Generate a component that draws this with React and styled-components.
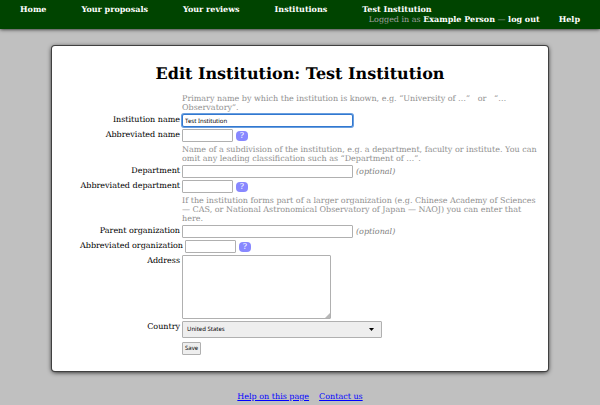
import React from "react";
import styled, { createGlobalStyle, css } from "styled-components";

const GlobalStyle = createGlobalStyle`
  *, *::before, *::after { box-sizing: border-box; }
  body {
    margin: 0;
    background: #c0c0c0;
    color: #000;
    font: 8px/10px "DejaVu Serif", serif;
    text-rendering: geometricPrecision;
  }
`;

const Header = styled.header`
  padding: 4px 20px;
  background: #004400;
  color: #a0a0a0;
  box-shadow: 0 0 4px #000;
`;

const Nav = styled.nav`
  display: flex;
  gap: 35px;
`;

const HeaderLink = styled.a`
  color: #fff;
  font-weight: bold;
  text-decoration: none;
`;

const Account = styled.div`
  display: flex;
  justify-content: flex-end;
  gap: 19px;
`;

const Card = styled.main`
  margin: 17px 52px 0;
  padding: 19px 9px 16px 28px;
  background: #fff;
  border-radius: 3px;
  box-shadow: 0 0 0 1px #404040, 0 1px 5px #000;
`;

const Title = styled.h1`
  margin: 0 0 10px -19px;
  font-size: 16px;
  line-height: 18px;
  text-align: center;
`;

const Form = styled.form`
  display: flex;
  flex-direction: column;
`;

const Hint = styled.p`
  margin: 0 0 2px 102px;
  padding-top: 1px;
  color: #909090;
  line-height: 9px;
`;

const Row = styled.div`
  display: flex;
  align-items: flex-start;
  gap: 2px;
  padding-bottom: 2px;
`;

const Label = styled.label`
  min-width: 100px;
  line-height: 11px;
  text-align: right;
  white-space: nowrap;
`;

const Control = styled.div`
  display: flex;
  align-items: center;
  gap: 3px;
`;

const fieldBox = css`
  margin: 0;
  border: 1px solid #b0b0b0;
  border-radius: 1px;
  color: #000;
  font: 6px/9px "Noto Sans", sans-serif;
  text-rendering: geometricPrecision;
`;

const Input = styled.input`
  ${fieldBox}
  width: ${(p) => (p.$short ? 51 : 171)}px;
  height: 13px;
  padding: 0 2px;
  background: #fff;
  ${(p) =>
    p.$active &&
    css`
      border-color: #3278d0;
      border-radius: 2px;
      box-shadow: 0 0 0 1px #6a9fdf;
    `}
`;

const TextArea = styled.textarea`
  ${fieldBox}
  display: block;
  width: 149px;
  height: 64px;
  padding: 2px;
  background: #fff;
  resize: none;
`;

const AreaWrap = styled.div`
  position: relative;
`;

const Grip = styled.svg`
  position: absolute;
  right: 1px;
  bottom: 1px;
  width: 5px;
  height: 5px;
  pointer-events: none;
`;

const SelectWrap = styled.div`
  position: relative;
  display: flex;
  align-items: center;
`;

const Select = styled.select`
  ${fieldBox}
  appearance: none;
  width: 200px;
  height: 17px;
  padding: 0 16px 0 4px;
  background: #eee;
`;

const Arrow = styled.svg`
  position: absolute;
  right: 8px;
  width: 5px;
  height: 3px;
  pointer-events: none;
`;

const HelpButton = styled.button`
  width: 12px;
  height: 10px;
  padding: 0;
  border: 0;
  border-radius: 4px;
  background: #8888ff;
  color: #fff;
  font: 8px/10px "DejaVu Serif", serif;
  text-align: center;
  text-rendering: geometricPrecision;
`;

const Optional = styled.em`
  color: #808080;
`;

const SaveButton = styled.button`
  ${fieldBox}
  align-self: flex-start;
  height: 13px;
  margin: 2px 0 0 102px;
  padding: 0 2px;
  background: #eee;
`;

const Footer = styled.footer`
  display: flex;
  justify-content: center;
  gap: 10px;
  padding: 21px 0 3px;
`;

const FooterLink = styled.a`
  color: #0000ff;
`;

const navItems = ["Home", "Your proposals", "Your reviews", "Institutions", "Test Institution"];

function Field({ id, label, short, value, optional, active }) {
  return (
    <Row>
      <Label htmlFor={id}>{label}</Label>
      <Control>
        <Input id={id} type="text" defaultValue={value} $short={short} $active={active} />
        {short && <HelpButton type="button" aria-label={`Help: ${label}`}>?</HelpButton>}
        {optional && <Optional>(optional)</Optional>}
      </Control>
    </Row>
  );
}

export default function App() {
  return (
    <>
      <GlobalStyle />
      <Header>
        <Nav>
          {navItems.map((item) => (
            <HeaderLink key={item} href="#">{item}</HeaderLink>
          ))}
        </Nav>
        <Account>
          <span>
            Logged in as <HeaderLink href="#">Example Person</HeaderLink> —{" "}
            <HeaderLink href="#">log out</HeaderLink>
          </span>
          <HeaderLink href="#">Help</HeaderLink>
        </Account>
      </Header>
      <Card>
        <Title>Edit Institution: Test Institution</Title>
        <Form>
          <Hint>
            {"Primary name by which the institution is known, e.g. “University of …”\u00a0 \u00a0or\u00a0 \u00a0“… Observatory”."}
          </Hint>
          <Field id="name" label="Institution name" value="Test Institution" active />
          <Field id="abbr" label="Abbreviated name" short />
          <Hint>
            Name of a subdivision of the institution, e.g. a department, faculty or institute. You can omit any
            leading classification such as “Department of …”.
          </Hint>
          <Field id="department" label="Department" optional />
          <Field id="department-abbr" label="Abbreviated department" short />
          <Hint>
            If the institution forms part of a larger organization (e.g. Chinese Academy of Sciences — CAS, or
            National Astronomical Observatory of Japan — NAOJ) you can enter that here.
          </Hint>
          <Field id="organization" label="Parent organization" optional />
          <Field id="organization-abbr" label="Abbreviated organization" short />
          <Row>
            <Label htmlFor="address">Address</Label>
            <AreaWrap>
              <TextArea id="address" />
              <Grip viewBox="0 0 5 5" aria-hidden="true">
                <path d="M5 0V5H0Z" fill="#b8b8b8" />
              </Grip>
            </AreaWrap>
          </Row>
          <Row>
            <Label htmlFor="country">Country</Label>
            <SelectWrap>
              <Select id="country" defaultValue="United States">
                <option>United States</option>
              </Select>
              <Arrow viewBox="0 0 5 3" aria-hidden="true">
                <path d="M0 0H5L2.5 3Z" fill="#000" />
              </Arrow>
            </SelectWrap>
          </Row>
          <SaveButton type="submit">Save</SaveButton>
        </Form>
      </Card>
      <Footer>
        <FooterLink href="#">Help on this page</FooterLink>
        <FooterLink href="#">Contact us</FooterLink>
      </Footer>
    </>
  );
}
